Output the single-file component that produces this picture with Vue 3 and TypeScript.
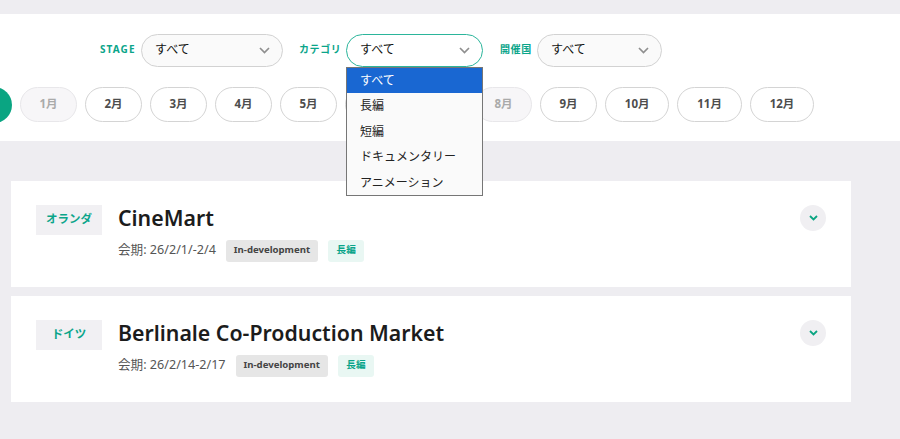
<script setup lang="ts">
const months = ['1月','2月','3月','4月','5月','6月','7月','8月','9月','10月','11月','12月']
const disabled = ['1月','8月']
const options = ['すべて','長編','短編','ドキュメンタリー','アニメーション']
const filters = [
  { label: 'STAGE', cls: 'stage', open: false },
  { label: 'カテゴリ', cls: 'cat', open: true },
  { label: '開催国', cls: 'host', open: false },
]
const cards = [
  { country: 'オランダ', title: 'CineMart', date: '会期: 26/2/1/-2/4' },
  { country: 'ドイツ', title: 'Berlinale Co-Production Market', date: '会期: 26/2/14-2/17' },
]
</script>

<template>
  <div class="page">
    <section class="panel">
      <div class="filters">
        <div v-for="f in filters" :key="f.label" class="filter" :class="f.cls">
          <span class="flabel">{{ f.label }}</span>
          <div class="select" :class="{ open: f.open }">
            <span>すべて</span>
            <svg class="caret" width="11" height="7" viewBox="0 0 11 7"><path d="M1 1l4.5 4.5L10 1" fill="none" stroke="#8f8f8f" stroke-width="1.7"/></svg>
            <ul v-if="f.open" class="menu">
              <li v-for="(o, i) in options" :key="o" :class="{ active: i === 0 }">{{ o }}</li>
            </ul>
          </div>
        </div>
      </div>
      <div class="months">
        <span class="all"></span>
        <button v-for="m in months" :key="m" class="month" :class="{ off: disabled.includes(m), wide: m.length > 2 }">{{ m }}</button>
      </div>
    </section>
    <section class="list">
      <article v-for="c in cards" :key="c.title" class="card">
        <div class="place">{{ c.country }}</div>
        <div class="body">
          <h2>{{ c.title }}</h2>
          <div class="meta">
            <span class="date">{{ c.date }}</span>
            <span class="tag gray">In-development</span>
            <span class="tag mint">長編</span>
          </div>
        </div>
        <button class="toggle" aria-label="開く">
          <svg width="9" height="6" viewBox="0 0 9 6"><path d="M1 1l3.5 3.5L8 1" fill="none" stroke="#0aa582" stroke-width="1.8"/></svg>
        </button>
      </article>
    </section>
  </div>
</template>

<style>
html, body { margin: 0; background: #eeedf1; }
</style>

<style scoped>
.page {
  height: 439px;
  overflow: hidden;
  background: #eeedf1;
  padding-top: 14px;
  box-sizing: border-box;
  font-family: "Noto Sans", "Noto Sans CJK JP", sans-serif;
  color: #222;
}
.panel {
  background: #fff;
  height: 127px;
  box-sizing: border-box;
  padding-top: 20px;
}
.filters {
  display: flex;
  padding-left: 100px;
  height: 33px;
}
.filter { flex: none; display: flex; align-items: center; gap: 5px; }
.stage { margin-right: 16px; }
.cat { margin-right: 17px; }
.flabel {
  flex: none;
  white-space: nowrap;
  font-size: 10px;
  font-weight: 700;
  letter-spacing: 0.6px;
  color: #0ba58a;
  margin-top: -4px;
}
.stage .flabel { width: 36px; letter-spacing: 1.1px; }
.cat .flabel { width: 42px; }
.host .flabel { width: 32px; }
.select {
  position: relative;
  flex: none;
  height: 33px;
  box-sizing: border-box;
  border: 1px solid #d2d2d2;
  border-radius: 17px;
  background: #fafafa;
  padding: 0 12px 0 13px;
  display: flex;
  align-items: center;
  justify-content: space-between;
  font-size: 12px;
  font-family: "Noto Sans CJK JP", sans-serif;
  color: #111;
}
.select > span { margin-top: -4px; }
.stage .select { width: 142px; }
.cat .select { width: 137px; border-color: #2bb59b; background: #fff; }
.host .select { width: 125px; }
.menu {
  position: absolute;
  top: 32px;
  left: -1px;
  width: 137px;
  box-sizing: border-box;
  margin: 0;
  padding: 0;
  list-style: none;
  background: #fafafa;
  border: 1px solid #767676;
  z-index: 5;
}
.menu li {
  height: 25.4px;
  line-height: 24px;
  padding-left: 13px;
  font-size: 12px;
  color: #222;
}
.menu li.active { background: #1967d2; color: #fff; }
.months {
  display: flex;
  align-items: center;
  gap: 8px;
  margin-top: 19px;
  overflow: hidden;
  height: 37px;
}
.all {
  flex: none;
  width: 36px;
  height: 36px;
  margin-left: -24px;
  border-radius: 50%;
  background: #0aa582;
}
.month {
  flex: none;
  width: 57px;
  height: 35px;
  padding: 0 0 4px;
  box-sizing: border-box;
  border: 1px solid #d4d4d4;
  border-radius: 18px;
  background: #fff;
  font: 700 11.5px "Noto Sans", "Noto Sans CJK JP", sans-serif;
  color: #4d4d4d;
}
.month.wide { width: 64.4px; }
.month.off { background: #f7f6f8; border-color: #e8e7ea; color: #aaa; }
.list {
  margin: 40px 49px 0 11px;
  display: flex;
  flex-direction: column;
  gap: 9px;
}
.card {
  height: 106px;
  box-sizing: border-box;
  background: #fff;
  padding: 24px 25px 0;
  display: flex;
  align-items: flex-start;
}
.place {
  flex: none;
  width: 66px;
  height: 30px;
  background: #f1f0f3;
  color: #0ba58a;
  font-size: 11.5px;
  font-weight: 700;
  line-height: 26px;
  text-align: center;
  font-family: "Noto Sans CJK JP", sans-serif;
}
.body { flex: 1; margin-left: 16px; }
h2 {
  margin: -2px 0 0;
  font-size: 21.3px;
  font-weight: 600;
  line-height: 29px;
  color: #1c1c1c;
}
.meta {
  display: flex;
  align-items: center;
  margin-top: 8px;
  font-size: 12.6px;
  color: #555;
}
.date { margin-right: 10px; line-height: 20px; margin-top: -3px; }
.tag {
  height: 22px;
  line-height: 19px;
  border-radius: 3px;
  font-size: 9.6px;
  font-weight: 700;
  box-sizing: border-box;
}
.gray { background: #e6e6e6; color: #444; padding: 0 8px; margin-right: 10px; }
.mint { background: #e9f7f3; color: #0ba58a; padding: 0 8.5px; }
.toggle {
  flex: none;
  width: 26px;
  height: 26px;
  padding: 0;
  border: 0;
  border-radius: 50%;
  background: #f0eff2;
  display: flex;
  align-items: center;
  justify-content: center;
}
</style>
